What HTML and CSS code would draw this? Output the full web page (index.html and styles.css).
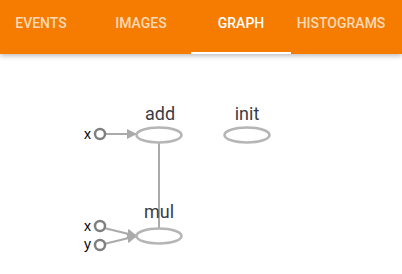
FILE: index.html
```html
<!DOCTYPE html>
<html lang="en">
<head>
  <meta charset="UTF-8">
  <title>Graph</title>
  <link rel="stylesheet" href="styles.css">
</head>
<body>
  <div class="toolbar">
    <div class="tabs">
      <div class="tab">Events</div>
      <div class="tab">Images</div>
      <div class="tab selected">Graph</div>
      <div class="tab">Histograms</div>
    </div>
  </div>

  <svg class="graph" width="402" height="220" viewBox="0 54 402 220">
    <defs>
      <marker id="arrow" viewBox="0 0 10 10" refX="10" refY="5" markerWidth="5" markerHeight="5" orient="auto">
        <path d="M0 0 L10 5 L0 10 Z" fill="#aaa"></path>
      </marker>
    </defs>

    <!-- edges -->
    <line class="edge" x1="159" y1="143" x2="159" y2="228"></line>
    <line class="edge" x1="105" y1="134" x2="137" y2="134" marker-end="url(#arrow)"></line>
    <line class="edge" x1="104" y1="228" x2="137" y2="236" marker-end="url(#arrow)"></line>
    <line class="edge" x1="104" y1="244" x2="137" y2="236" marker-end="url(#arrow)"></line>

    <!-- op nodes -->
    <ellipse class="op" cx="159" cy="135" rx="22.5" ry="7.5"></ellipse>
    <ellipse class="op" cx="247" cy="135" rx="22.5" ry="7.5"></ellipse>
    <ellipse class="op" cx="159" cy="236" rx="22.5" ry="7.5"></ellipse>
    <text class="name" x="160" y="120">add</text>
    <text class="name" x="247" y="120">init</text>
    <text class="name" x="159" y="218">mul</text>

    <!-- inputs -->
    <circle class="input" cx="100" cy="134" r="5"></circle>
    <circle class="input" cx="100" cy="226" r="5"></circle>
    <circle class="input" cx="100" cy="245" r="5"></circle>
    <text class="arg" x="91" y="139">x</text>
    <text class="arg" x="91" y="231">x</text>
    <text class="arg" x="91" y="249">y</text>
  </svg>
</body>
</html>
```

FILE: styles.css
```css
body {
  margin: 0;
  background: #fff;
  font-family: Roboto, 'Liberation Sans', sans-serif;
  overflow: hidden;
}
.toolbar {
  position: relative;
  height: 54px;
  background: #f57c00;
  box-shadow: 0 2px 5px rgba(0,0,0,0.26);
  z-index: 1;
}
.tabs {
  display: flex;
  margin-left: -9px;
  height: 54px;
}
.tab {
  width: 100px;
  flex: none;
  box-sizing: border-box;
  padding-top: 15px;
  text-align: center;
  font-size: 14px;
  font-weight: 500;
  text-transform: uppercase;
  color: rgba(255,255,255,0.72);
}
.tab.selected {
  color: #fff;
  border-bottom: 2px solid #fff;
}
.graph {
  display: block;
}
.edge {
  stroke: #aaa;
  stroke-width: 2;
}
.op {
  fill: #fff;
  stroke: #b5b5b5;
  stroke-width: 2.5;
}
.input {
  fill: #fff;
  stroke: #7f7f7f;
  stroke-width: 2.5;
}
.name {
  font-size: 18px;
  fill: #3b3b46;
  text-anchor: middle;
}
.arg {
  font-family: 'Liberation Sans', sans-serif;
  font-size: 14px;
  fill: #000;
  text-anchor: end;
}
```
